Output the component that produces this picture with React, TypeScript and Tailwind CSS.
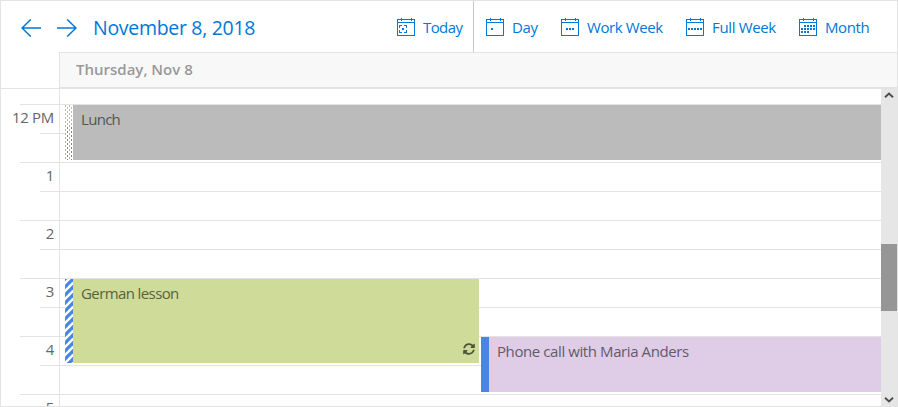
import { FaSyncAlt } from "react-icons/fa";

type ViewKey = "today" | "day" | "workWeek" | "fullWeek" | "month";

// dot positions inside the 18x18 calendar glyph
const DOTS: Record<ViewKey, [number, number][]> = {
  today: [[5, 10]],
  day: [[5, 10]],
  workWeek: [[5, 10], [8, 10], [11, 10]],
  fullWeek: [[2, 10], [5, 10], [8, 10], [11, 10], [14, 10]],
  month: [
    [5, 7], [8, 7], [11, 7], [14, 7],
    [2, 10], [5, 10], [8, 10], [11, 10], [14, 10],
    [2, 13], [5, 13], [8, 13],
  ],
};

const VIEWS: { key: ViewKey; label: string; className: string; text: string }[] = [
  { key: "day", label: "Day", className: "w-[75px]", text: "tracking-[-0.4px]" },
  { key: "workWeek", label: "Work Week", className: "w-[125px]", text: "tracking-[-0.4px]" },
  { key: "fullWeek", label: "Full Week", className: "w-[113px]", text: "tracking-[-0.35px]" },
  { key: "month", label: "Month", className: "w-[72px]", text: "tracking-[-0.4px]" },
];

const HOURS = ["12 PM", "1", "2", "3", "4", "5"];

function CalendarIcon({ view }: { view: ViewKey }) {
  return (
    <svg width="18" height="18" viewBox="0 0 18 18" fill="none" className="shrink-0" shapeRendering="crispEdges">
      <path d="M.5 1.5h17v16H.5zM.5 4.5h17M4.5 0v3M14.5 0v3" stroke="#0078d7" />
      {view === "today" && (
        <path d="M5 7.5H2.5V10M7 7.5h2.5V10M2.5 12v2.5H5M9.5 12v2.5H7" stroke="#0078d7" />
      )}
      {DOTS[view].map(([x, y]) => (
        <rect key={`${x}-${y}`} x={x} y={y} width="2" height="2" fill="#0078d7" />
      ))}
    </svg>
  );
}

function NavArrow({ direction }: { direction: "left" | "right" }) {
  return (
    <svg width="20" height="18" viewBox="0 0 20 18" fill="none" className="shrink-0">
      <path
        d={direction === "left" ? "M20 9H1M9.8 .4L1 9L9.8 17.6" : "M0 9H19M10.2 .4L19 9L10.2 17.6"}
        stroke="currentColor"
        strokeWidth="1.4"
      />
    </svg>
  );
}

function Toolbar() {
  return (
    <div className="flex h-[51px] text-[#0078d7]">
      <div className="flex w-[396px] items-center pt-0.5 pl-5">
        <NavArrow direction="left" />
        <div className="w-4" />
        <NavArrow direction="right" />
        <span className="ml-4 text-[19.5px] leading-[26px] tracking-[-0.3px] whitespace-nowrap">November 8, 2018</span>
      </div>
      <div className="flex w-[77px] items-center gap-2 border-r border-[#c8c8c8] whitespace-nowrap">
        <CalendarIcon view="today" />
        <span className="pt-0.5 tracking-[-0.6px]">Today</span>
      </div>
      <div className="flex pl-3">
        {VIEWS.map((v) => (
          <div key={v.key} className={`flex items-center gap-2 whitespace-nowrap ${v.className}`}>
            <CalendarIcon view={v.key} />
            <span className={`pt-0.5 ${v.text}`}>{v.label}</span>
          </div>
        ))}
      </div>
    </div>
  );
}

function TentativeBar() {
  return (
    <svg width="8" height="55" className="shrink-0" shapeRendering="crispEdges">
      <defs>
        <pattern id="tentative" width="4" height="4" patternUnits="userSpaceOnUse">
          <rect width="1" height="2" fill="#b4b4d6" />
          <rect x="2" y="2" width="1" height="2" fill="#b4b4d6" />
        </pattern>
        <pattern id="tentative-dark" width="4" height="4" patternUnits="userSpaceOnUse">
          <rect width="1" height="2" fill="#a9a9d0" />
          <rect x="2" y="2" width="1" height="2" fill="#8080b8" />
        </pattern>
      </defs>
      <rect width="8" height="55" fill="#fff" />
      <rect width="8" height="20" fill="url(#tentative)" />
      <rect y="20" width="8" height="35" fill="url(#tentative-dark)" />
    </svg>
  );
}

function StripedBar() {
  return (
    <svg width="8" height="84" className="shrink-0">
      <rect width="8" height="84" fill="#fff" />
      {Array.from({ length: 13 }, (_, i) => (
        <path key={i} d={`M-1 ${i * 8 + 1}L9 ${i * 8 - 9}`} stroke="#4a86e0" strokeWidth="3.2" />
      ))}
    </svg>
  );
}

function TimeRuler() {
  return (
    <div className="w-[58px] shrink-0 pt-[15px] text-[#666]">
      {HOURS.map((hour) => (
        <div key={hour} className="flex h-[58px] flex-col">
          <div className="ml-[19px] h-[29px] border-t border-[#e3e3e3]">
            <div className="-ml-[19px] pt-0.5 pr-[5px] text-right leading-5 tracking-[-0.3px]">{hour}</div>
          </div>
          <div className="ml-[39px] h-[29px] border-t border-[#e3e3e3]" />
        </div>
      ))}
    </div>
  );
}

function DayColumn() {
  return (
    <div className="relative flex-1 border-l border-[#e3e3e3] pt-[15px] text-[#555]">
      {Array.from({ length: 11 }, (_, i) => (
        <div key={i} className="h-[29px] border-t border-[#e3e3e3]" />
      ))}
      <div className="absolute top-4 right-0 left-[5px] flex h-[55px] bg-[#bbb]">
        <TentativeBar />
        <span className="pt-[3px] pl-2 leading-[22px] tracking-[-0.7px]">Lunch</span>
      </div>
      <div className="absolute top-[190px] left-[5px] flex h-[84px] w-[414px] bg-[#cfdb98] text-[#5b6043]">
        <StripedBar />
        <span className="pt-[3px] pl-2 leading-[22px] tracking-[-0.6px]">German lesson</span>
        <FaSyncAlt size={12} className="mt-auto mr-1 mb-2 ml-auto text-[#4d5238]" />
      </div>
      <div className="absolute top-[248px] right-0 left-[421px] flex h-[55px] bg-[#dfcde8] text-[#635b67]">
        <div className="w-2 shrink-0 bg-[#4a86e0]" />
        <span className="pt-[3px] pl-2 leading-[22px] tracking-[-0.41px]">Phone call with Maria Anders</span>
      </div>
    </div>
  );
}

function Scrollbar() {
  return (
    <div className="flex w-4 shrink-0 flex-col items-center bg-[#e6e6e6] text-[#4d4d4d]">
      <svg width="10" height="6" viewBox="0 0 10 6" fill="none" className="mt-[3px]">
        <path d="M1 5.2L5 1.6L9 5.2" stroke="currentColor" strokeWidth="2" />
      </svg>
      <div className="mt-[146px] h-[67px] w-4 bg-[#969696]" />
      <svg width="10" height="6" viewBox="0 0 10 6" fill="none" className="mt-auto mb-[3px]">
        <path d="M1 .8L5 4.4L9 .8" stroke="currentColor" strokeWidth="2" />
      </svg>
    </div>
  );
}

export default function App() {
  return (
    <div className="flex h-[407px] w-[898px] flex-col overflow-hidden border border-[#e3e3e3] bg-white font-['Open_Sans','Noto_Sans',sans-serif] text-[15px]">
      <Toolbar />
      <div className="flex h-[37px] shrink-0">
        <div className="w-[58px] border-b border-[#e3e3e3]" />
        <div className="flex flex-1 items-center border-t border-b-2 border-l border-[#e3e3e3] bg-[#f8f8f8] pl-4 font-semibold text-[#999]">
          <span className="-mt-0.5">Thursday, Nov 8</span>
        </div>
      </div>
      <div className="flex h-[317px] overflow-hidden">
        <TimeRuler />
        <DayColumn />
        <Scrollbar />
      </div>
    </div>
  );
}
